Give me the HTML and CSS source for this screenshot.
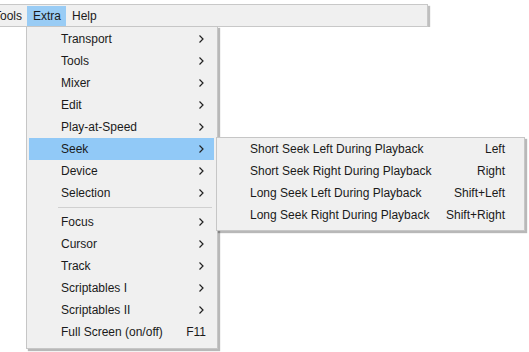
FILE: index.html
```html
<!DOCTYPE html>
<html lang="en">

<head>
    <meta charset="UTF-8">
    <title>Extra menu</title>
    <link rel="stylesheet" href="styles.css">
</head>

<body>
    <div class="menubar">
        <span class="bar-item">Tools</span>
        <span class="bar-item open">Extra</span>
        <span class="bar-item">Help</span>
    </div>

    <div class="dropdown">
        <div class="row"><span class="label">Transport</span><svg class="arrow" width="5" height="8"><polyline points="0.5,0.5 4,4 0.5,7.5"/></svg></div>
        <div class="row"><span class="label">Tools</span><svg class="arrow" width="5" height="8"><polyline points="0.5,0.5 4,4 0.5,7.5"/></svg></div>
        <div class="row"><span class="label">Mixer</span><svg class="arrow" width="5" height="8"><polyline points="0.5,0.5 4,4 0.5,7.5"/></svg></div>
        <div class="row"><span class="label">Edit</span><svg class="arrow" width="5" height="8"><polyline points="0.5,0.5 4,4 0.5,7.5"/></svg></div>
        <div class="row"><span class="label">Play-at-Speed</span><svg class="arrow" width="5" height="8"><polyline points="0.5,0.5 4,4 0.5,7.5"/></svg></div>
        <div class="row active"><span class="label">Seek</span><svg class="arrow" width="5" height="8"><polyline points="0.5,0.5 4,4 0.5,7.5"/></svg></div>
        <div class="row"><span class="label">Device</span><svg class="arrow" width="5" height="8"><polyline points="0.5,0.5 4,4 0.5,7.5"/></svg></div>
        <div class="row"><span class="label">Selection</span><svg class="arrow" width="5" height="8"><polyline points="0.5,0.5 4,4 0.5,7.5"/></svg></div>
        <div class="separator"></div>
        <div class="row"><span class="label">Focus</span><svg class="arrow" width="5" height="8"><polyline points="0.5,0.5 4,4 0.5,7.5"/></svg></div>
        <div class="row"><span class="label">Cursor</span><svg class="arrow" width="5" height="8"><polyline points="0.5,0.5 4,4 0.5,7.5"/></svg></div>
        <div class="row"><span class="label">Track</span><svg class="arrow" width="5" height="8"><polyline points="0.5,0.5 4,4 0.5,7.5"/></svg></div>
        <div class="row"><span class="label">Scriptables I</span><svg class="arrow" width="5" height="8"><polyline points="0.5,0.5 4,4 0.5,7.5"/></svg></div>
        <div class="row"><span class="label">Scriptables II</span><svg class="arrow" width="5" height="8"><polyline points="0.5,0.5 4,4 0.5,7.5"/></svg></div>
        <div class="row"><span class="label">Full Screen (on/off)</span><span class="key">F11</span></div>
    </div>

    <div class="submenu">
        <div class="row"><span class="label">Short Seek Left During Playback</span><span class="key">Left</span></div>
        <div class="row"><span class="label">Short Seek Right During Playback</span><span class="key">Right</span></div>
        <div class="row"><span class="label">Long Seek Left During Playback</span><span class="key">Shift+Left</span></div>
        <div class="row"><span class="label">Long Seek Right During Playback</span><span class="key">Shift+Right</span></div>
    </div>
</body>

</html>
```

FILE: styles.css
```css
body {
    margin: 0;
    background: #fff;
    font-family: "Liberation Sans", Arial, sans-serif;
    font-size: 12px;
    color: #1a1a1a;
}

.menubar {
    display: flex;
    width: 439px;
    height: 21px;
    margin: 4px 0 0 -13px;
    background: #f0f0f0;
    border: 1px solid #c8c8c8;
    box-shadow: 2px 2px 1px rgba(0, 0, 0, 0.25);
}

.bar-item {
    display: flex;
    align-items: center;
    padding: 0 5px 0 6px;
    margin-top: 1px;
}

.bar-item.open {
    background: #99ccf5;
}

.dropdown,
.submenu {
    position: absolute;
    box-sizing: border-box;
    background: #f0f0f0;
    border: 1px solid #c6c6c6;
    box-shadow: 2px 2px 1px rgba(0, 0, 0, 0.28);
}

.dropdown {
    left: 26px;
    top: 26px;
    width: 192px;
    padding: 1px 3px 5px 2px;
}

.submenu {
    left: 216px;
    top: 137px;
    width: 309px;
    padding: 0 2px 4px 2px;
}

.row {
    display: flex;
    align-items: center;
    height: 22px;
    padding-left: 32px;
}

.row.active {
    background: #91c9f7;
}

.label {
    flex: 1;
}

.dropdown .row {
    padding-right: 10px;
}

.dropdown .key {
    margin-right: -2px;
}

.submenu .row {
    padding-left: 31px;
    padding-right: 17px;
}

.arrow {
    fill: none;
    stroke: #222;
    stroke-width: 1.2;
}

.separator {
    height: 1px;
    margin: 3px 2px 3px 29px;
    background: #d0d0d0;
}
```
